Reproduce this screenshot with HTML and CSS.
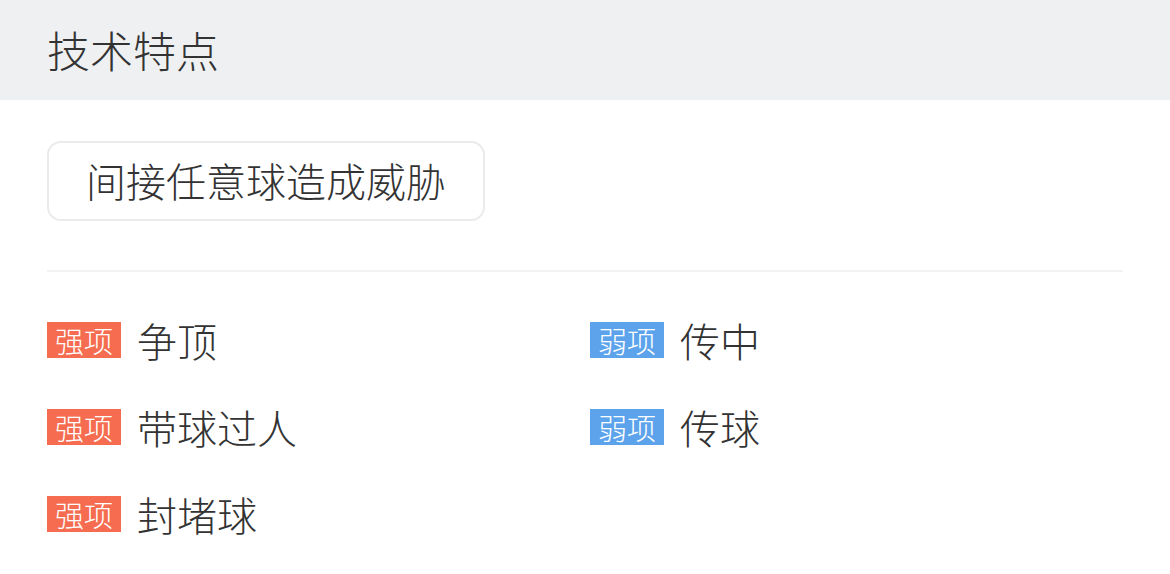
FILE: index.html
```html
<!DOCTYPE html>
<html lang="zh">
<head>
<meta charset="utf-8">
<link rel="stylesheet" href="styles.css">
</head>
<body>
<div class="header">技术特点</div>
<div class="content">
  <div class="chips">
    <div class="chip">间接任意球造成威胁</div>
  </div>
  <div class="divider"></div>
  <div class="grid">
    <div class="item"><span class="badge strong">强项</span><span class="label">争顶</span></div>
    <div class="item"><span class="badge weak">弱项</span><span class="label">传中</span></div>
    <div class="item"><span class="badge strong">强项</span><span class="label">带球过人</span></div>
    <div class="item"><span class="badge weak">弱项</span><span class="label">传球</span></div>
    <div class="item"><span class="badge strong">强项</span><span class="label">封堵球</span></div>
  </div>
</div>
</body>
</html>
```
FILE: styles.css
```css
* { box-sizing: border-box; }
html, body { margin: 0; padding: 0; background: #fff; }
body {
  font-family: "Noto Sans CJK SC", "Noto Sans", sans-serif;
  font-weight: 300;
  color: #333;
  width: 1170px;
  height: 574px;
  overflow: hidden;
}
.header {
  height: 100px;
  background: #eff0f2;
  padding-left: 47px;
  font-size: 43px;
  line-height: 98px;
  color: #333;
}
.content {
  padding: 0 47px;
}
.chips {
  display: flex;
  padding-top: 41px;
}
.chip {
  height: 80px;
  border: 2px solid #ebebeb;
  border-radius: 14px;
  padding: 0 37px;
  font-size: 40px;
  line-height: 75px;
  color: #333;
}
.divider {
  margin-top: 49px;
  height: 2px;
  background: #f3f3f3;
}
.grid {
  display: grid;
  grid-template-columns: 543px 1fr;
  row-gap: 35px;
  margin-top: 42px;
}
.item {
  display: flex;
  align-items: center;
  height: 52px;
}
.badge {
  display: inline-block;
  height: 36px;
  line-height: 36px;
  padding: 0 8px;
  font-size: 29px;
  color: #fff;
}
.badge.strong { background: #f56c50; }
.badge.weak { background: #5ca3ec; }
.label {
  margin-left: 16px;
  font-size: 40px;
  line-height: 52px;
  color: #333;
}
```
